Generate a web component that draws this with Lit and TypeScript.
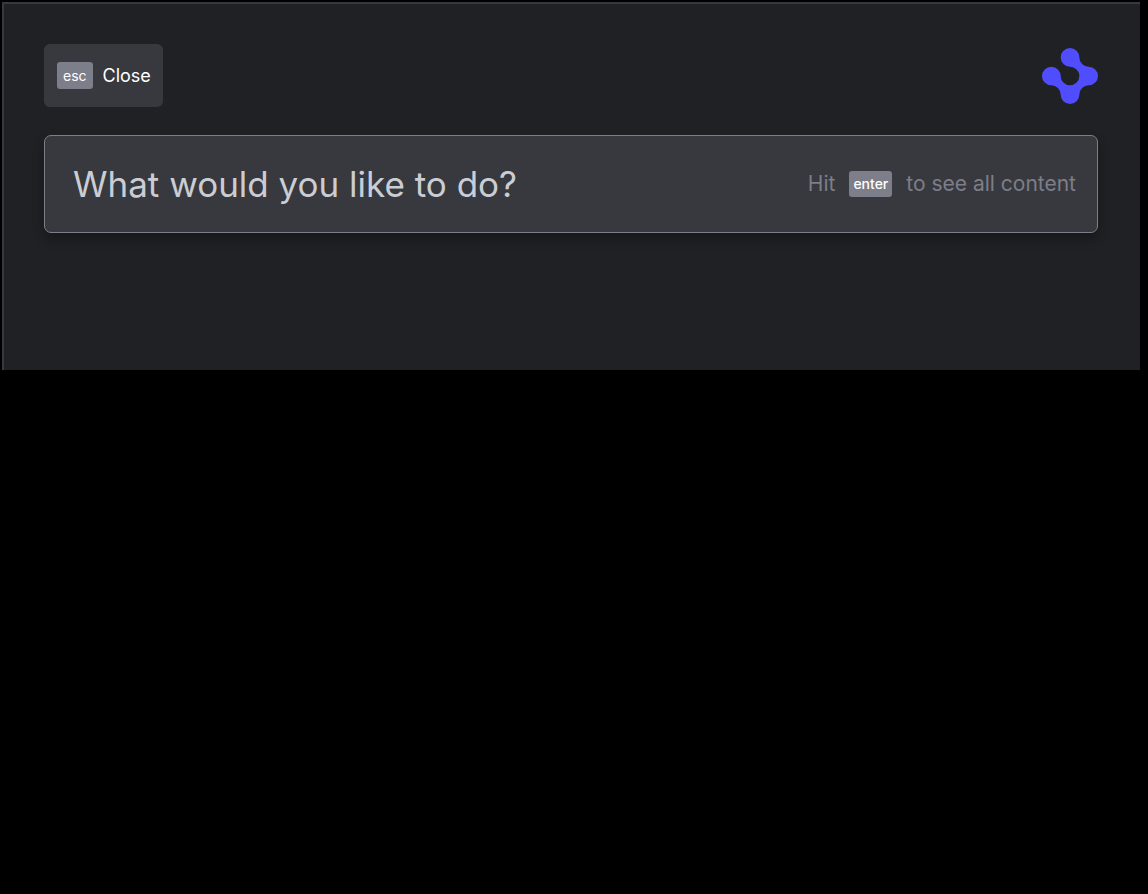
import { LitElement, html, css } from "lit";
import { customElement, state } from "lit/decorators.js";

@customElement("app-root")
export class AppRoot extends LitElement {
  static styles = css`
    :host {
      display: block;
      box-sizing: border-box;
      min-height: 100vh;
      padding: 2px 8px 0 2px;
      background: #000;
      font-family: Inter, "Liberation Sans", sans-serif;
    }
    .panel {
      box-sizing: border-box;
      padding: 40px 42px 137px 40px;
      border: solid #38393e;
      border-width: 2px 0 0 2px;
      background: #202124;
    }
    .bar {
      display: flex;
      align-items: center;
      justify-content: space-between;
      margin-bottom: 28px;
    }
    .close {
      display: flex;
      align-items: center;
      gap: 10px;
      height: 63px;
      padding: 0 12px 0 13px;
      border: 0;
      border-radius: 6px;
      background: #38393e;
      color: #fff;
      font: 400 18px/23px Inter, "Liberation Sans", sans-serif;
      cursor: pointer;
    }
    .key {
      padding: 0 6px;
      border-radius: 3px;
      background: #7c7e89;
      color: #fff;
      font: 400 14px/27px Inter, "Liberation Sans", sans-serif;
    }
    .enter {
      padding: 0 4px;
      font-weight: 500;
      line-height: 26px;
    }
    .logo {
      width: 56px;
      height: 56px;
      fill: #504dff;
    }
    .search {
      display: flex;
      align-items: center;
      padding: 0 21px 0 28px;
      border: 1px solid #7c7e89;
      border-radius: 7px;
      background: #38393e;
      box-shadow: 0 6px 12px rgba(0, 0, 0, 0.3);
    }
    .field {
      flex: 1;
      min-width: 0;
      height: 96px;
      padding: 0;
      border: 0;
      outline: 0;
      background: none;
      color: #cbcdd5;
      font: 400 35px/44px Inter, "Liberation Sans", sans-serif;
    }
    .field::placeholder {
      color: #cbcdd5;
      opacity: 1;
    }
    .hint {
      display: flex;
      align-items: center;
      gap: 14px;
      color: #7c7e89;
      font-size: 21px;
      font-weight: 400;
      line-height: 26px;
      white-space: nowrap;
    }
  `;

  @state() private query = "";

  private onInput(e: Event) {
    this.query = (e.target as HTMLInputElement).value;
  }

  render() {
    return html`
      <main class="panel">
        <header class="bar">
          <button class="close" type="button">
            <kbd class="key">esc</kbd><span>Close</span>
          </button>
          <svg class="logo" viewBox="0 0 6 6" aria-hidden="true">
            <path
              d="M3 0A1 1 0 0 1 4 1A1 1 0 0 0 5 2A1 1 0 0 1 5 4A1 1 0 0 0 4 5A1 1 0 0 1 2 5A1 1 0 0 0 1 4A1 1 0 0 1 1 2A1 1 0 0 1 2 3A1 1 0 0 0 3 4A1 1 0 0 0 3 2A1 1 0 0 1 3 0Z"
            />
          </svg>
        </header>
        <label class="search">
          <input
            class="field"
            type="text"
            aria-label="What would you like to do?"
            placeholder="What would you like to do?"
            .value=${this.query}
            @input=${this.onInput}
          />
          <span class="hint">
            <span>Hit</span><kbd class="key enter">enter</kbd><span>to see all content</span>
          </span>
        </label>
      </main>
    `;
  }
}
